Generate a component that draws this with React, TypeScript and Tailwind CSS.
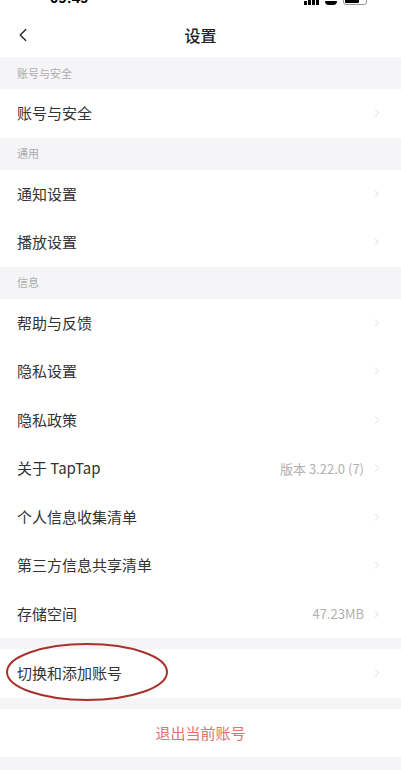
import { ChevronLeft, ChevronRight } from 'lucide-react';

type Row = { label: string; value?: string };

const Header = ({ title }: { title: string }) => (
  <div className="h-[32px] bg-[#f5f5f7] flex items-center px-[17px] text-[11px] text-[#ababab]">
    {title}
  </div>
);

const Item = ({ label, value }: Row) => (
  <div className="h-[48.5px] bg-white flex items-center pl-[17px] pr-[18px]">
    <span className="flex-1 text-[15px] text-[#333333]">{label}</span>
    {value && <span className="text-[13px] text-[#b0b0b0] mr-[7px]">{value}</span>}
    <ChevronRight className="w-[12px] h-[12px] text-[#cccccc]" strokeWidth={1.5} />
  </div>
);

const info: Row[] = [
  { label: '帮助与反馈' },
  { label: '隐私设置' },
  { label: '隐私政策' },
  { label: '关于 TapTap', value: '版本 3.22.0 (7)' },
  { label: '个人信息收集清单' },
  { label: '第三方信息共享清单' },
  { label: '存储空间', value: '47.23MB' },
];

export default function App() {
  return (
    <div
      className="w-[401px] h-[770px] overflow-hidden bg-[#f5f5f7]"
      style={{ fontFamily: '"Noto Sans CJK SC", "Noto Sans", sans-serif' }}
    >
      {/* status bar, cut at the top */}
      <div className="h-[5px] bg-white overflow-hidden relative">
        <div className="flex items-end justify-between h-[5px] pl-[50px] pr-[34px]">
          <span className="text-[15px] font-semibold leading-none text-black -mb-[0px]" style={{ fontFamily: '"Liberation Sans", sans-serif' }}>
            09:49
          </span>
          <div className="flex items-end gap-[6px]">
            <div className="flex items-end gap-[1px]">
              <div className="w-[3px] h-[4px] bg-black" />
              <div className="w-[3px] h-[6px] bg-black" />
              <div className="w-[3px] h-[8px] bg-black" />
              <div className="w-[3px] h-[10px] bg-black" />
            </div>
            <div className="w-[12px] h-[4px] bg-black rounded-b-full" />
            <div className="w-[24px] h-[10px] rounded-[3px] border border-[#999] p-[1px] flex">
              <div className="w-[14px] bg-black rounded-[1px]" />
            </div>
          </div>
        </div>
      </div>

      {/* nav bar */}
      <div className="h-[52px] bg-white flex items-center px-[12px] relative">
        <ChevronLeft className="w-[22px] h-[22px] text-[#222] mt-[8px]" strokeWidth={1.4} />
        <div className="flex-1 text-center text-[16px] font-medium text-[#222] mt-[8px] mr-[22px]">设置</div>
      </div>

      <Header title="账号与安全" />
      <Item label="账号与安全" />

      <Header title="通用" />
      <Item label="通知设置" />
      <Item label="播放设置" />

      <Header title="信息" />
      {info.map((r) => (
        <Item key={r.label} label={r.label} value={r.value} />
      ))}

      <div className="h-[11px]" />
      <div className="relative">
        <Item label="切换和添加账号" />
        <svg className="absolute left-[4px] top-[-9px] pointer-events-none" width="166" height="64" viewBox="0 0 166 64">
          <ellipse cx="83" cy="32" rx="80" ry="28" fill="none" stroke="#a8322a" strokeWidth="2" />
        </svg>
      </div>

      <div className="h-[11px]" />
      <div className="h-[48.5px] bg-white flex items-center justify-center text-[15px] text-[#e2706c]">
        退出当前账号
      </div>
    </div>
  );
}
